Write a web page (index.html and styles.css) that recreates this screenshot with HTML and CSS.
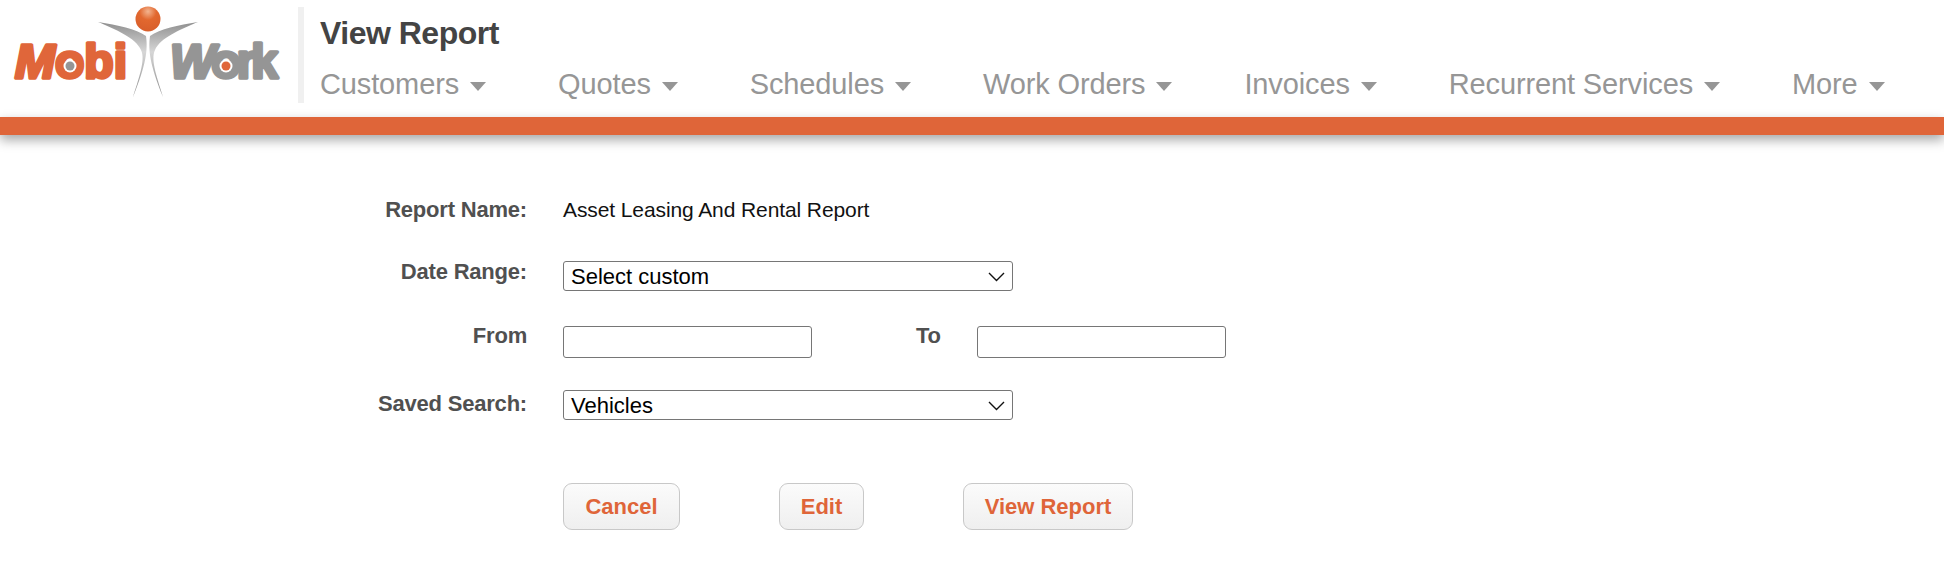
FILE: index.html
```html
<!DOCTYPE html>
<html lang="en">
<head>
  <meta charset="UTF-8" />
  <title>View Report</title>
  <link rel="stylesheet" href="styles.css">
</head>
<body>
  <header class="header">
    <div class="logo-box">
      <svg class="logo" viewBox="0 0 270 92" width="270" height="92">
        <defs>
          <linearGradient id="grey" x1="0" y1="0" x2="0" y2="1">
            <stop offset="0" stop-color="#8f8f8f"/>
            <stop offset="0.4" stop-color="#d6d6d6"/>
            <stop offset="1" stop-color="#8a8a8a"/>
          </linearGradient>
          <radialGradient id="ball" cx="0.5" cy="0.2" r="0.75">
            <stop offset="0" stop-color="#f3b48f"/>
            <stop offset="0.45" stop-color="#e2682f"/>
            <stop offset="1" stop-color="#d95f2b"/>
          </radialGradient>
        </defs>
        <circle cx="135" cy="13" r="12.5" fill="url(#ball)"/>
        <path d="M85 16 C105 19 123 23 133 30 C135 44 133 59 120 91 C125 74 133 54 128 44 C123 32 102 23 85 16Z" fill="url(#grey)"/>
        <path d="M85 16 C105 19 123 23 133 30 C135 44 133 59 120 91 C125 74 133 54 128 44 C123 32 102 23 85 16Z" fill="url(#grey)" transform="matrix(-1 0 0 1 270 0)"/>
        <text class="logo-word logo-mobi" x="2" y="72"><tspan class="logo-slant">M</tspan>obi</text>
        <text class="logo-word logo-work" x="157" y="72"><tspan class="logo-slant">W</tspan>ork</text>
        <circle cx="57" cy="60" r="6.5" fill="#fff"/>
        <circle cx="57" cy="60" r="4.5" fill="#959595"/>
        <circle cx="213" cy="60" r="6.5" fill="#fff"/>
        <circle cx="213" cy="60" r="4.5" fill="#e0663a"/>
      </svg>
    </div>
    <div class="header-main">
      <h1 class="page-title">View Report</h1>
      <nav class="nav">
        <a class="nav-item">Customers</a>
        <a class="nav-item">Quotes</a>
        <a class="nav-item">Schedules</a>
        <a class="nav-item">Work Orders</a>
        <a class="nav-item">Invoices</a>
        <a class="nav-item">Recurrent Services</a>
        <a class="nav-item">More</a>
      </nav>
    </div>
  </header>
  <div class="orange-bar"></div>

  <form class="report-form">
    <div class="row row-name">
      <label class="field-label">Report Name:</label>
      <span class="field-value">Asset Leasing And Rental Report</span>
    </div>
    <div class="row row-range">
      <label class="field-label">Date Range:</label>
      <div class="select-box">Select custom
        <svg width="17" height="10" viewBox="0 0 17 10"><path d="M1 1 L8.5 8.5 L16 1" fill="none" stroke="#111" stroke-width="1.4"/></svg>
      </div>
    </div>
    <div class="row row-dates">
      <label class="field-label">From</label>
      <input class="date-input" type="text" />
      <label class="field-label to-label">To</label>
      <input class="date-input" type="text" />
    </div>
    <div class="row row-saved">
      <label class="field-label">Saved Search:</label>
      <div class="select-box">Vehicles
        <svg width="17" height="10" viewBox="0 0 17 10"><path d="M1 1 L8.5 8.5 L16 1" fill="none" stroke="#111" stroke-width="1.4"/></svg>
      </div>
    </div>
    <div class="buttons">
      <button type="button" class="btn btn-cancel">Cancel</button>
      <button type="button" class="btn btn-edit">Edit</button>
      <button type="button" class="btn btn-view">View Report</button>
    </div>
  </form>
</body>
</html>
```

FILE: styles.css
```css
body {
  margin: 0;
  background: #fff;
  font-family: "Liberation Sans", Arial, sans-serif;
  color: #4d4d4d;
}

.header {
  display: flex;
  height: 117px;
}

.logo-box {
  flex: none;
  width: 298px;
  padding: 6px 0 0 13px;
  box-sizing: border-box;
}

.logo {
  display: block;
  overflow: visible;
}

.logo-word {
  font-family: "Liberation Sans", Arial, sans-serif;
  font-size: 48px;
  font-weight: bold;
  stroke-width: 3.5px;
  stroke-linejoin: round;
}

.logo-slant {
  font-style: italic;
}

.logo-mobi {
  fill: #e0663a;
  stroke: #e0663a;
}

.logo-work {
  fill: #959595;
  stroke: #959595;
  letter-spacing: -4px;
}

.header-main {
  margin-top: 7px;
  height: 96px;
  flex: 1;
  border-left: 6px solid #f0f0f0;
  padding-left: 16px;
}

.page-title {
  margin: 9px 0 0;
  font-size: 32px;
  line-height: 34px;
  letter-spacing: -0.5px;
  color: #444;
}

.nav {
  display: flex;
  margin-top: 17px;
}

.nav-item {
  font-size: 29px;
  line-height: 34px;
  letter-spacing: -0.13px;
  color: #969696;
  white-space: nowrap;
  margin-right: 72px;
}

.nav-item::after {
  content: "";
  display: inline-block;
  margin-left: 11px;
  vertical-align: 3px;
  border-left: 8.5px solid transparent;
  border-right: 8.5px solid transparent;
  border-top: 9px solid #969696;
}

.orange-bar {
  height: 18px;
  background: #df6539;
  box-shadow: 0 5px 12px rgba(0, 0, 0, 0.35);
}

.report-form {
  padding-top: 60px;
}

.row {
  display: flex;
  align-items: flex-start;
}

.field-label {
  width: 527px;
  flex: none;
  text-align: right;
  font-size: 22px;
  font-weight: bold;
  line-height: 30px;
  letter-spacing: -0.2px;
  color: #505050;
  margin-right: 36px;
}

.field-value {
  font-size: 21px;
  line-height: 30px;
  letter-spacing: -0.1px;
  color: #111;
}

.row-range {
  margin-top: 36px;
}

.row-range .field-label {
  margin-top: -4px;
  height: 30px;
}

.row-saved .field-label {
  margin-top: -1px;
  height: 30px;
}

.row-dates {
  margin-top: 35px;
}

.row-dates .field-label {
  margin-top: -5px;
}

.row-saved {
  margin-top: 32px;
}

.select-box {
  width: 450px;
  height: 30px;
  box-sizing: border-box;
  display: flex;
  align-items: center;
  justify-content: space-between;
  padding: 1px 7px 0 7px;
  border: 1px solid #767676;
  border-radius: 3px;
  font-size: 22px;
  color: #000;
}

.date-input {
  width: 249px;
  height: 32px;
  box-sizing: border-box;
  border: 1px solid #767676;
  border-radius: 3px;
  padding: 0;
  margin: 0;
  background: #fff;
}

.field-label.to-label {
  width: auto;
  margin-left: 104px;
  margin-right: 36px;
}

.buttons {
  display: flex;
  margin: 63px 0 0 563px;
}

.btn {
  height: 47px;
  box-sizing: border-box;
  border: 1px solid #c8c8c8;
  border-radius: 9px;
  background: linear-gradient(#fbfbfb, #efefef);
  color: #df6539;
  font-family: "Liberation Sans", Arial, sans-serif;
  font-size: 22px;
  font-weight: bold;
  padding: 0;
}

.btn-cancel {
  width: 117px;
}

.btn-edit {
  width: 85px;
  margin-left: 99px;
}

.btn-view {
  width: 170px;
  margin-left: 99px;
}
```
